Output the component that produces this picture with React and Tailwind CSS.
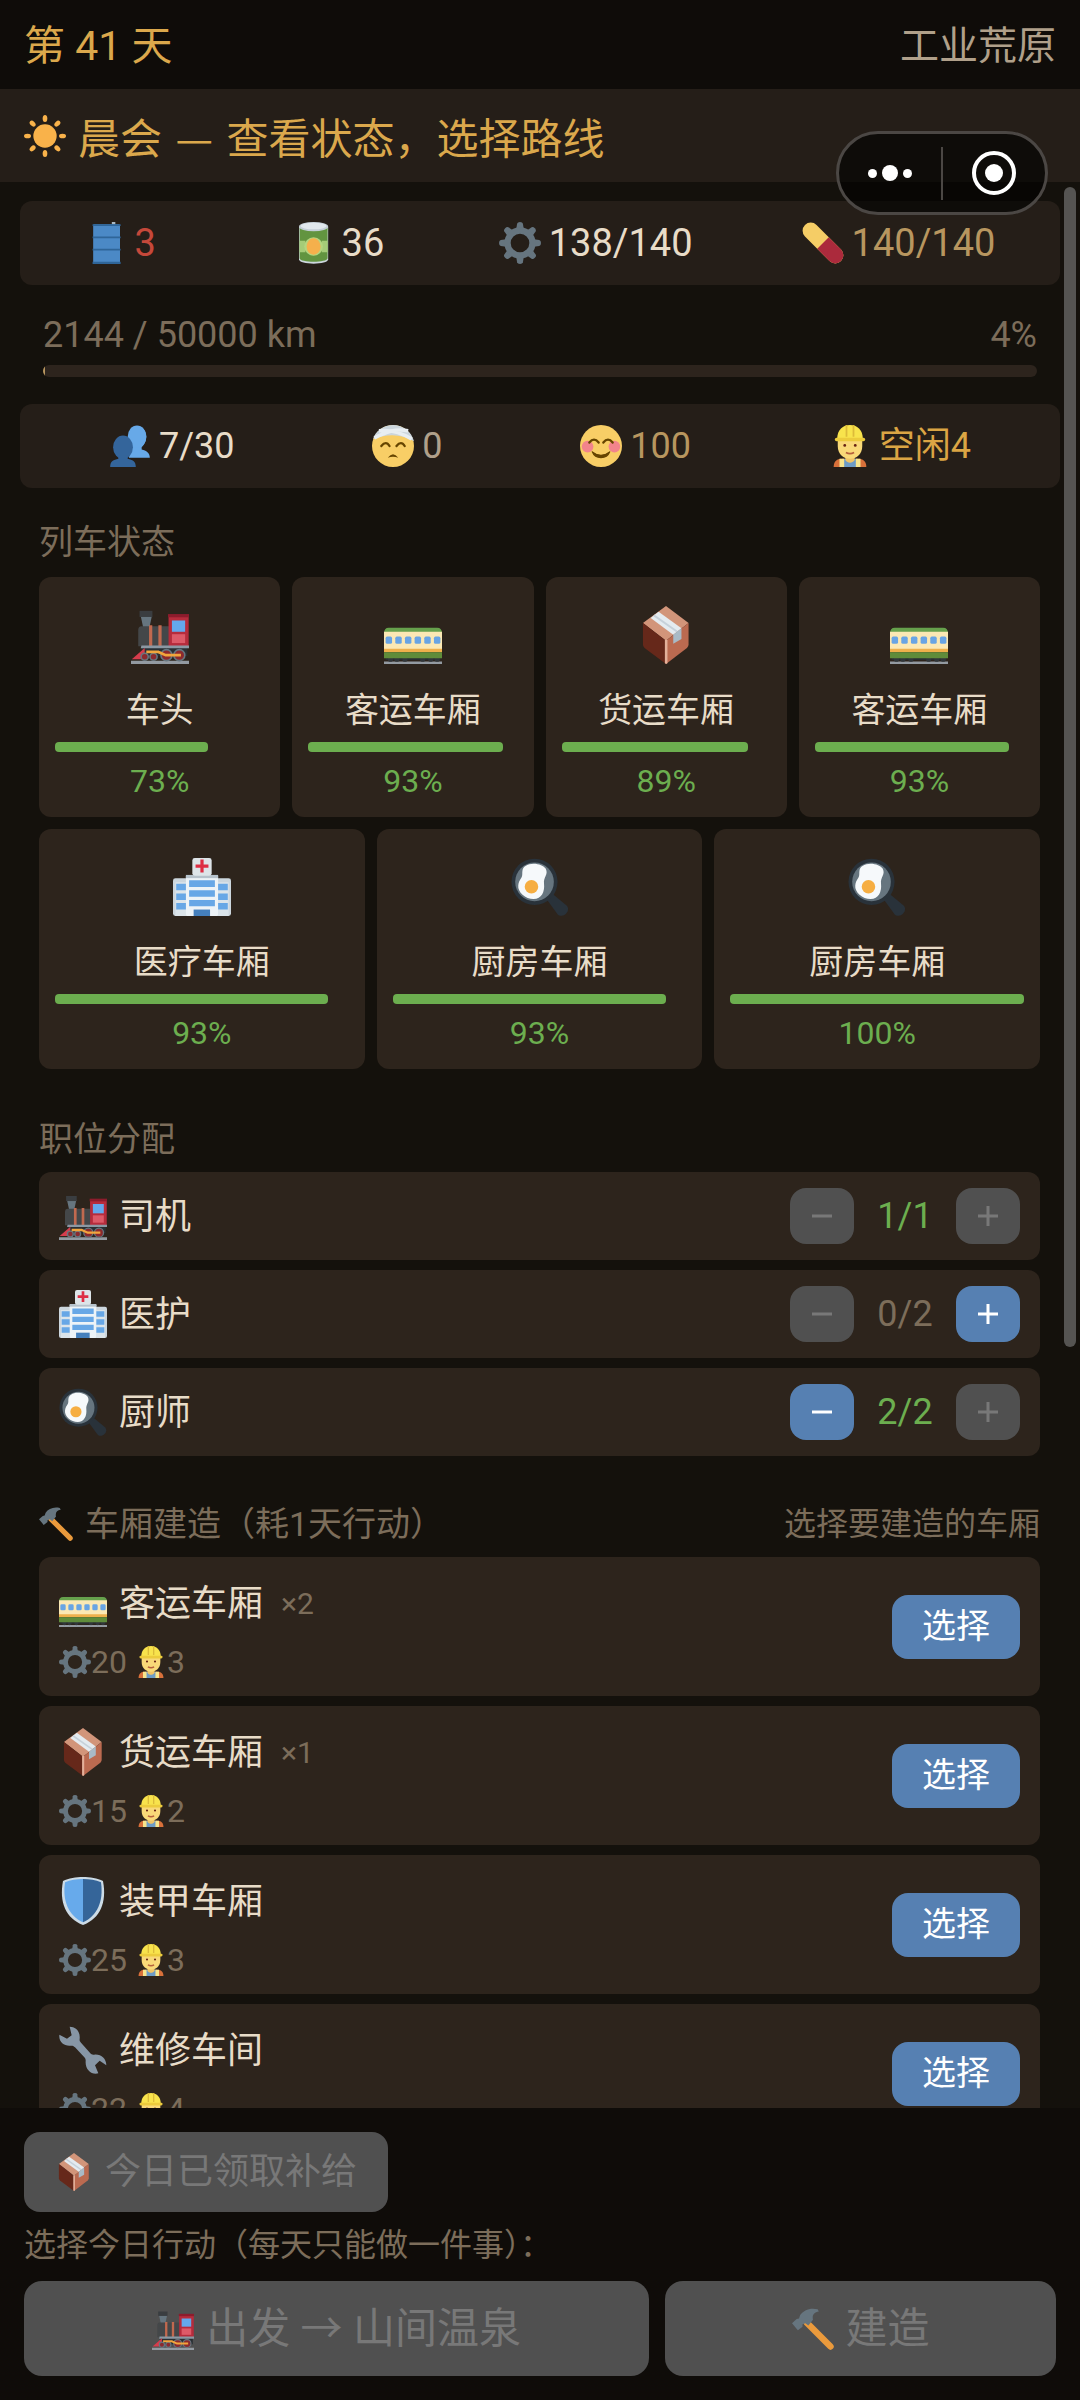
import React, { useState } from 'react';
import clsx from 'clsx';

const Sun = () => (
  <g fill="#f9b24a">
    <circle cx="18" cy="18" r="10" />
    {[0, 45, 90, 135, 180, 225, 270, 315].map((a) => (
      <ellipse key={a} cx="18" cy="3" rx="2" ry="3" transform={`rotate(${a} 18 18)`} />
    ))}
  </g>
);

const Barrel = () => (
  <g>
    <rect x="23" y="0" width="3" height="3" fill="#aab8c2" />
    <rect x="7" y="2" width="23" height="34" rx="1" fill="#4b89c6" />
    <path d="M6.5 2h24v1.5h-24zM6.5 12.5h24V14h-24zM6.5 23h24v1.5h-24zM6.5 34h24v2h-24z" fill="#2f6598" />
  </g>
);

const Can = () => (
  <g>
    <path d="M6 4h25v28c0 5-25 5-25 0z" fill="#ccd6dd" />
    <path d="M6.5 5h24v26c0 4-24 4-24 0z" fill="#629440" />
    <path d="M6.5 16h5v10h-5zM25.500 16h5v10h-5z" fill="#a5cc78" />
    <ellipse cx="18.500" cy="21" rx="8" ry="8" fill="#b4d57f" />
    <ellipse cx="18.500" cy="21" rx="6" ry="7" fill="#f5b04c" />
    <ellipse cx="18.500" cy="4" rx="12.500" ry="4" fill="#c3ced6" />
    <ellipse cx="18.500" cy="3.500" rx="11" ry="2.800" fill="#e1e8ed" />
  </g>
);

const Gear = () => (
  <g fill="#66757f">
    {[0, 45, 90, 135, 180, 225, 270, 315].map((a) => (
      <path key={a} d="M14.500 8 L15.500 1.500 Q15.800 0 18 0 Q20.200 0 20.500 1.500 L21.500 8z" transform={`rotate(${a} 18 18)`} />
    ))}
    <circle cx="18" cy="18" r="10.700" fill="none" stroke="#66757f" strokeWidth="5.400" />
  </g>
);

const Pill = () => (
  <g strokeWidth="14" fill="none">
    <path d="M7.500 7.500 L28.500 28.500" stroke="#f5cd66" strokeLinecap="round" />
    <path d="M18 18 L28.500 28.500" stroke="#ab2a3c" />
    <circle cx="28.500" cy="28.500" r="7" fill="#ab2a3c" stroke="none" />
  </g>
);

const Busts = () => (
  <g>
    <path d="M24 1c5 0 8 4 8 9 0 4-2 7-4 9v2c4 1 7 3 7 7H17z" fill="#67a9e8" />
    <ellipse cx="24" cy="10" rx="8" ry="9.500" fill="#67a9e8" />
    <ellipse cx="12" cy="19" rx="8.500" ry="10" fill="#34659b" />
    <path d="M8 26h8v3c4 1 7 2 7 7H1c0-5 3-6 7-7z" fill="#34659b" />
  </g>
);

const Bandaged = () => (
  <g>
    <circle cx="18" cy="18" r="18" fill="#f8ce66" />
    <path d="M1 12C3 5 10 0 18 0c9 0 16 6 18 14C26 8 14 7 1 12z" fill="#ccd6dd" />
    <path d="M2 11C12 6 20 3 31 5M6 5c8-1 18 1 28 7" stroke="#e8eef2" strokeWidth="3" fill="none" />
    <path d="M8 18q4-5 7 0M21 18q4-5 7 0" stroke="#664500" strokeWidth="2" fill="none" strokeLinecap="round" />
    <path d="M13.500 28q4.500-6 9 0-4.500-1.500-9 0z" fill="#664500" />
  </g>
);

const Smile = () => (
  <g>
    <circle cx="18" cy="18" r="18" fill="#f8ce66" />
    <circle cx="6.500" cy="18.500" r="5" fill="#f2848c" />
    <circle cx="29.500" cy="18.500" r="5" fill="#f2848c" />
    <path d="M8 15q4-5 8 0M20 15q4-5 8 0" stroke="#664500" strokeWidth="2" fill="none" strokeLinecap="round" />
    <path d="M10.500 23q7.500 6 15 0-2 5-7.500 5t-7.500-5z" fill="#664500" stroke="#664500" strokeLinejoin="round" />
  </g>
);

const Worker = () => (
  <g>
    <path d="M4 36c0-5 3-7 7-7h14c4 0 7 2 7 7z" fill="#d8703a" />
    <path d="M11 29h14v7H11z" fill="#6d9cc6" />
    <path d="M9 29h4v7H9zM23 29h4v7h-4z" fill="#f8e58c" />
    <path d="M14 25h8v5c-2 3-6 3-8 0z" fill="#f0c466" />
    <path d="M7.500 11h21v7c0 7-5 11-10.500 11S7.500 25 7.500 18z" fill="#f9d978" />
    <path d="M7 12C7 4 12 0 18 0s11 4 11 12z" fill="#f8e34c" />
    <rect x="5" y="11" width="26" height="3" rx="1.500" fill="#eccb3c" />
    <path d="M15 0v10M21 0v10" stroke="#dcbb3a" strokeWidth="1.500" />
    <circle cx="13.500" cy="17.500" r="1.200" fill="#662113" />
    <circle cx="22.500" cy="17.500" r="1.200" fill="#662113" />
    <path d="M14.500 23.500q3.500 2 7 0" stroke="#b5603c" strokeWidth="1.500" fill="none" />
  </g>
);

const Loco = () => (
  <g>
    <path d="M0 34h36v2H0z" fill="#939aa1" />
    <path d="M6 25h29v6H8z" fill="#292f33" />
    <path d="M6 6h7l-1.500 7h-4z" fill="#66757f" />
    <rect x="5.300" y="3" width="8" height="3.800" fill="#3a3d40" />
    <path d="M6.500 12.500H24V25H4.500V15q0-2.500 2-2.500z" fill="#444749" />
    <path d="M11.200 12h2v13h-2zM17 12h2v13h-2z" fill="#c1694f" />
    <path d="M23.300 5.500h12.500V25H23.300z" fill="#b62c3c" />
    <path d="M23 5h13v2H23z" fill="#8c1c2c" />
    <rect x="25.400" y="9" width="8.200" height="7" fill="#64a8ec" />
    <rect x="25.400" y="17.500" width="8.200" height="5.500" fill="#dd5a68" />
    <path d="M6.500 24.500H36v1.800H6z" fill="#8b98a3" />
    <path d="M8.500 26L0.500 33h8z" fill="#d63c4c" />
    <g fill="#8c2a2e" stroke="#66757f" strokeWidth="1">
      <circle cx="8.500" cy="31.500" r="2.200" />
      <circle cx="14" cy="31.500" r="2.200" />
      <circle cx="22" cy="30.500" r="3.400" />
      <circle cx="30" cy="30.500" r="3.400" />
    </g>
    <path d="M9.500 28.500h7.500l4.500 2h9.500" stroke="#f2a53c" strokeWidth="1.700" fill="none" />
  </g>
);

const Coach = () => (
  <g>
    <path d="M0 34.500h36V36H0z" fill="#939aa1" />
    <path d="M1 32h34v1.500H1z" fill="#292f33" />
    {[4, 8, 13, 24, 29, 33].map((x) => (
      <circle key={x} cx={x} cy="33" r="1.600" fill="#30363a" />
    ))}
    <path d="M0 17q0-3.500 3-3.500h30q3 0 3 3.500z" fill="#66a14c" />
    <path d="M0 16h36v11H0z" fill="#fbe8b4" />
    <path d="M0 26.500h36v2.200H0z" fill="#eeb04c" />
    <path d="M0 28.700h36v3.800H0z" fill="#5f8c3a" />
    {[1, 7, 13, 19, 25, 31].map((x) => (
      <rect key={x} x={x} y="19" width="4" height="4.500" rx="1" fill="#68a4e4" />
    ))}
  </g>
);

const Box = () => (
  <g>
    <path d="M18 0L32 10.500 18 21.500 3.700 10.500z" fill="#d2957a" />
    <path d="M3.700 10.500L18 21.500V36L4.700 26q-1-1-1-2z" fill="#66281a" />
    <path d="M32 10.500L18 21.500V36l13-10q1-1 1-2z" fill="#bb6a50" />
    <path d="M17.300 21h1.600v14.500l-.9.500-.7-.5z" fill="#e3b09a" />
    <path d="M8.500 7.500L13.400 3.500 27.600 13.800 22.500 17.800z" fill="#e4ebf0" />
    <path d="M10.500 5.800L25 16" stroke="#c6d1da" strokeWidth="1.200" />
    <path d="M22.500 17.800l5.100-4v6.700l-5.100 3z" fill="#a9bac6" />
  </g>
);

const Hospital = () => (
  <g>
    <rect x="0" y="12.500" width="36" height="23.500" rx="1.500" fill="#ccd6dd" />
    <path d="M1.500 15h6.500v21H1.500zM28 15h6.500v21H28z" fill="#dbe4ea" />
    <rect x="8" y="10.500" width="20" height="25.500" rx="1" fill="#edf3f7" />
    <rect x="8" y="10.500" width="20" height="2" fill="#b6c2cb" />
    <rect x="12" y="0" width="12" height="11" rx="1.500" fill="#dde4e8" />
    <path d="M17 1h2v3h3v2h-3v3h-2V6h-3V4h3z" fill="#dd2e44" />
    <g fill="#67a7e6">
      <path d="M10 13.800h16V18H10zM10 20h16v4H10zM10 26h16v4H10z" />
      <path d="M2 16h6v4H2zM2 22h6v4H2zM2 28h6v4H2zM28 16h6v4h-6zM28 22h6v4h-6zM28 28h6v4h-6z" />
    </g>
    <path d="M12.800 32H23v4H12.800z" fill="#4580bd" />
  </g>
);

const Pan = () => (
  <g>
    <path d="M22 25.500l3.500-3.500 9 7.500c3 3-2 8.500-5.500 5.500z" fill="#29323a" />
    <circle cx="14.600" cy="14.800" r="14.300" fill="#29323a" />
    <circle cx="14.600" cy="14.800" r="12" fill="#66757f" />
    <path d="M9 5c4-3 11-1 12.500 1.500 2 4-1.500 5-1 9.500.5 5-1.500 9.500-6.500 9.500S4 21 4.500 17C5 13 7 13 7 10 7 7 7.500 6 9 5z" fill="#f6f9fb" />
    <circle cx="12.700" cy="17.800" r="4.200" fill="#f6ae42" />
  </g>
);

const Hammer = () => (
  <g>
    <path d="M12.500 12.500L33 33" stroke="#ea9a3c" strokeWidth="5.500" strokeLinecap="round" />
    <path d="M22 1C15-.5 10 2 7 6L6 9 4 9.500 0 13l5 6 4-3v-2l2.500-1 2.500 2 4-5C17 6 19 3.500 23 3z" fill="#66757f" />
  </g>
);

const Shield = () => (
  <g>
    <path d="M18 0c5 0 11 1 15 3 3 16-2 28-15 33C5 31 0 19 3 3 7 1 13 0 18 0z" fill="#ccdbe6" />
    <path d="M18 1.500c-5 0-9.500.7-13.500 2.500C2.500 18 7 29 18 34z" fill="#67aaeb" />
    <path d="M18 1.500c5 0 9.500.7 13.500 2.500C33.500 18 29 29 18 34z" fill="#356599" />
  </g>
);

const Wrench = () => (
  <g>
    <path
      d="M8 .5c5 0 8 4 7.500 9-.2 1.500 0 2 1 3l7 8c1 1 1.500 1.200 3 1 5-.5 9 3 9 8l-5-3.500-3.500 3.500 2.500 6c-5 1.500-10-3-9.500-9 .1-1.300-.2-2-1-3l-7-7.500c-1-1-2-1.300-3-1.200C4 15.500-.5 12 .3 6.500L6 9.500 9.500 7z"
      fill="#8796a5"
    />
  </g>
);

const ART = {
  sun: Sun, barrel: Barrel, can: Can, gear: Gear, pill: Pill, busts: Busts, bandaged: Bandaged, smile: Smile,
  worker: Worker, loco: Loco, coach: Coach, box: Box, hospital: Hospital, pan: Pan, hammer: Hammer,
  shield: Shield, wrench: Wrench,
};

const Emoji = ({ name, className }) => {
  const Art = ART[name];
  return (
    <svg viewBox="0 0 36 36" aria-hidden="true" className={clsx('shrink-0', className)}>
      <Art />
    </svg>
  );
};

const resources = [
  { icon: 'barrel', value: '3', color: 'text-[#c5483a]' },
  { icon: 'can', value: '36', color: 'text-[#e8dcc8]' },
  { icon: 'gear', value: '138/140', color: 'text-[#e8dcc8]' },
  { icon: 'pill', value: '140/140', color: 'text-[#b8965f]' },
];

const crew = [
  { icon: 'busts', value: '7/30', color: 'text-[#e8dcc8]' },
  { icon: 'bandaged', value: '0', color: 'text-[#b0a08a]' },
  { icon: 'smile', value: '100', color: 'text-[#b8965f]' },
  { icon: 'worker', value: '空闲4', color: 'text-[#dba544]' },
];

const frontCars = [
  { icon: 'loco', name: '车头', hp: 73 },
  { icon: 'coach', name: '客运车厢', hp: 93 },
  { icon: 'box', name: '货运车厢', hp: 89 },
  { icon: 'coach', name: '客运车厢', hp: 93 },
];

const rearCars = [
  { icon: 'hospital', name: '医疗车厢', hp: 93 },
  { icon: 'pan', name: '厨房车厢', hp: 93 },
  { icon: 'pan', name: '厨房车厢', hp: 100 },
];

const jobs = [
  { icon: 'loco', name: '司机', count: 1, max: 1, locked: true },
  { icon: 'hospital', name: '医护', count: 0, max: 2 },
  { icon: 'pan', name: '厨师', count: 2, max: 2 },
];

const builds = [
  { icon: 'coach', name: '客运车厢', owned: 2, parts: 20, workers: 3 },
  { icon: 'box', name: '货运车厢', owned: 1, parts: 15, workers: 2 },
  { icon: 'shield', name: '装甲车厢', owned: 0, parts: 25, workers: 3 },
  { icon: 'wrench', name: '维修车间', owned: 0, parts: 22, workers: 4 },
];

const CarCard = ({ car }) => (
  <div className="flex flex-1 flex-col items-center rounded-xl bg-[#2d241c] px-4 pt-[29px] pb-[18px]">
    <Emoji name={car.icon} className="size-[58px]" />
    <span className="mt-6 text-[34px] leading-[44px] text-[#e8dcc8]">{car.name}</span>
    <div className="mt-[10px] h-[10px] w-full">
      <div className="h-full rounded-[4px] bg-[#6cae4f]" style={{ width: `${car.hp}%` }}></div>
    </div>
    <span className="mt-[11px] text-[32px] leading-9 text-[#6cae4f]">{car.hp}%</span>
  </div>
);

const StepButton = ({ sign, label, disabled, onClick }) => (
  <button
    type="button"
    aria-label={label}
    disabled={disabled}
    onClick={onClick}
    className="flex h-14 w-16 items-center justify-center rounded-[16px] bg-[#5680b2] text-white disabled:bg-[#505050] disabled:text-[#787878]"
  >
    <svg viewBox="0 0 20 20" className="size-5" stroke="currentColor" strokeWidth="3">
      <path d={sign === '+' ? 'M0 10h20M10 0v20' : 'M0 10h20'} />
    </svg>
  </button>
);

const JobRow = ({ job }) => {
  const [count, setCount] = useState(job.count);

  return (
    <div className="flex h-[88px] items-center rounded-xl bg-[#2d241c] px-5">
      <Emoji name={job.icon} className="size-12" />
      <span className="ml-3 flex-1 pt-0.5 text-[36px]  text-[#e8dcc8]">{job.name}</span>
      <StepButton sign="-" label={`减少${job.name}`} disabled={job.locked || count === 0} onClick={() => setCount(count - 1)} />
      <span className={clsx('w-[102px] text-center text-[36px]', count > 0 ? 'text-[#6cae4f]' : 'text-[#7c6d5a]')}>
        {count}/{job.max}
      </span>
      <StepButton sign="+" label={`增加${job.name}`} disabled={count >= job.max} onClick={() => setCount(count + 1)} />
    </div>
  );
};

const BuildRow = ({ item }) => (
  <div className="flex items-center justify-between rounded-xl bg-[#2d241c] px-5 pt-[22px] pb-[17px]">
    <div>
      <div className="flex h-12 items-center">
        <Emoji name={item.icon} className="size-12" />
        <span className="ml-3 pt-0.5 text-[36px] text-[#e8dcc8]">{item.name}</span>
        {item.owned > 0 && <span className="ml-[18px] text-[30px] text-[#7c6d5a]">×{item.owned}</span>}
      </div>
      <div className="mt-[18px] flex h-[34px] items-center text-[32px] text-[#7c6d5a]">
        <Emoji name="gear" className="size-8" />
        <span>{item.parts}</span>
        <Emoji name="worker" className="ml-2 size-8" />
        <span>{item.workers}</span>
      </div>
    </div>
    <button type="button" className="mb-[5px] h-16 w-32 rounded-[16px] bg-[#5680b2] text-[34px] text-white">
      选择
    </button>
  </div>
);

const App = () => {
  return (
    <div className="relative flex h-screen flex-col overflow-hidden bg-[#14110c] font-[Roboto,'Noto_Sans_CJK_SC',sans-serif]">
      {/* Day and region */}
      <header className="flex h-[89px] shrink-0 items-center justify-between bg-[#0f0c09] px-6 pt-1 text-[39px]">
        <h1 className="text-[41px] text-[#dba84c]">第 41 天</h1>
        <span className="text-[#b0a08a]">工业荒原</span>
      </header>

      <div className="flex h-[93px] shrink-0 items-center gap-3 bg-[#251e18] px-6 font-['Noto_Sans_CJK_SC',sans-serif] text-[42px] text-[#dba84c]">
        <Emoji name="sun" className="size-[42px]" />
        <h2>
          晨会 <span className="mx-1">—</span> 查看状态，选择路线
        </h2>
      </div>

      {/* Mini-program capsule */}
      <div className="absolute top-[131px] right-8 z-10 flex h-[84px] w-[212px] items-center rounded-full border-3 border-[#4b4744] bg-black/60">
        <button type="button" aria-label="更多" className="flex h-full flex-1 items-center justify-center gap-[5px]">
          <span className="size-[9px] rounded-full bg-white"></span>
          <span className="size-4 rounded-full bg-white"></span>
          <span className="size-[9px] rounded-full bg-white"></span>
        </button>
        <span className="h-[53px] w-0.5 bg-[#4b4744]"></span>
        <button type="button" aria-label="关闭" className="flex h-full flex-1 items-center justify-center">
          <span className="flex size-11 items-center justify-center rounded-full border-4 border-white">
            <span className="size-[18px] rounded-full bg-white"></span>
          </span>
        </button>
      </div>

      {/* Scroll area */}
      <div className="relative min-h-0 flex-1">
        <main className="h-full overflow-y-auto px-5 pt-[19px] [scrollbar-width:none]">
          <div className="flex h-[84px] items-center justify-around rounded-xl bg-[#251e18] px-[10px] text-[38px]">
            {resources.map((r) => (
              <div key={r.icon} className="flex min-w-[98px] items-center gap-2">
                <Emoji name={r.icon} className="size-[42px]" />
                <span className={r.color}>{r.value}</span>
              </div>
            ))}
          </div>

          <div className="mt-[27px] px-[23px]">
            <div className="flex justify-between text-[36px] leading-[46px] text-[#7c6d5a]">
              <span>2144 / 50000 km</span>
              <span>4%</span>
            </div>
            <div className="mt-[7px] h-3 overflow-hidden rounded-[6px] bg-[#2d241d]">
              <div className="h-full w-0.5 bg-[#b8965f]"></div>
            </div>
          </div>

          <div className="mt-[27px] flex h-[84px] items-center justify-around rounded-xl bg-[#251e18] px-5 text-[36px]">
            {crew.map((c) => (
              <div key={c.icon} className="flex items-center gap-2">
                <Emoji name={c.icon} className="size-[42px]" />
                <span className={c.color}>{c.value}</span>
              </div>
            ))}
          </div>

          <div className="pr-5 pl-[19px]">
            {/* Train status */}
            <section className="mt-8">
              <h3 className="mb-[13px] text-[34px] leading-[44px] text-[#7c6d5a]">列车状态</h3>
              <div className="flex gap-3">
                {frontCars.map((car, i) => (
                  <CarCard key={i} car={car} />
                ))}
              </div>
              <div className="mt-3 flex gap-3">
                {rearCars.map((car, i) => (
                  <CarCard key={i} car={car} />
                ))}
              </div>
            </section>

            {/* Job assignment */}
            <section className="mt-12">
              <h3 className="mb-[11px] text-[34px] leading-[44px] text-[#7c6d5a]">职位分配</h3>
              <div className="space-y-[10px]">
                {jobs.map((job) => (
                  <JobRow key={job.name} job={job} />
                ))}
              </div>
            </section>

            {/* Car building */}
            <section className="mt-[46px]">
              <div className="mb-[11px] flex items-center justify-between leading-[44px] text-[#7c6d5a]">
                <h3 className="flex items-center gap-3 text-[34px]">
                  <Emoji name="hammer" className="size-[34px]" />
                  车厢建造（耗1天行动）
                </h3>
                <span className="text-[32px]">选择要建造的车厢</span>
              </div>
              <div className="space-y-[10px]">
                {builds.map((item) => (
                  <BuildRow key={item.name} item={item} />
                ))}
              </div>
            </section>
          </div>
        </main>
        <div className="absolute top-[5px] right-1 h-[1160px] w-3 rounded-full bg-[#555452]"></div>
      </div>

      {/* Actions of the day */}
      <footer className="shrink-0 bg-[#0f0c09] p-6">
        <button type="button" disabled className="flex h-20 items-center gap-3 rounded-[16px] bg-[#505050] px-[31px] text-[36px] text-[#787878]">
          <Emoji name="box" className="size-[38px]" />
          今日已领取补给
        </button>
        <p className="mt-[13px] mb-4 text-[32px] leading-10 text-[#7c6d5a]">选择今日行动（每天只能做一件事）：</p>
        <div className="flex gap-4 text-[42px] text-[#787878]">
          <button type="button" disabled className="flex h-[95px] flex-[8] items-center justify-center gap-3 rounded-[18px] bg-[#505050]">
            <Emoji name="loco" className="size-[42px]" />
            出发 → 山间温泉
          </button>
          <button type="button" disabled className="flex h-[95px] flex-[5] items-center justify-center gap-3 rounded-[18px] bg-[#505050]">
            <Emoji name="hammer" className="size-[42px]" />
            建造
          </button>
        </div>
      </footer>
    </div>
  );
};

export default App;
